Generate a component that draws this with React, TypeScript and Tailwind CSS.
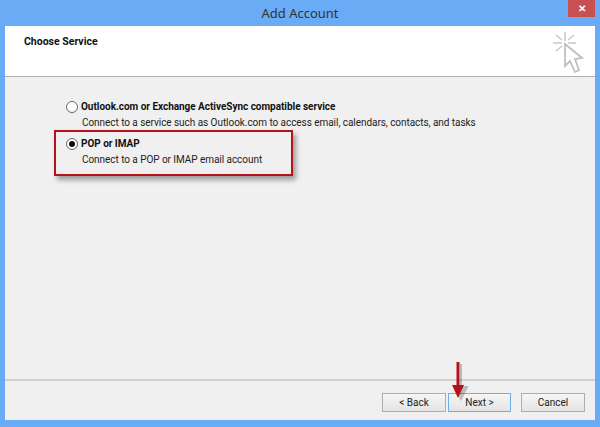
function ClickIcon() {
  return (
    <svg width="36" height="50" viewBox="0 0 36 50" fill="none" className="mt-[4px] mr-[8px]">
      <g stroke="#c8c8c8" strokeWidth="1.5">
        <path d="M14 2V11M2 13H11M17 13H25M5 5L11 10M23 5L17 10M5 21L11 16" />
      </g>
      <path d="M14 14V36L19 31L24 42L28 40L24 29L31 28Z" fill="#fff" stroke="#c0c0c0" strokeWidth="1.8" />
    </svg>
  )
}

function Radio({ checked }: { checked?: boolean }) {
  return (
    <span className="flex h-[12px] w-[12px] shrink-0 items-center justify-center rounded-full border border-[#666] bg-white">
      {checked && <span className="h-[6px] w-[6px] rounded-full bg-[#111]" />}
    </span>
  )
}

function Option({ label, detail, checked }: { label: string; detail: string; checked?: boolean }) {
  return (
    <div className="flex flex-col gap-[2px]">
      <div className="flex h-[14px] items-center gap-[3px]">
        <Radio checked={checked} />
        <span className="text-[10px] leading-[14px] font-bold tracking-[-0.03px] text-[#111]">{label}</span>
      </div>
      <div className="pl-[16px] text-[10px] leading-[14px] tracking-[-0.05px] text-[#222]">{detail}</div>
    </div>
  )
}

function Btn({ label, focused, className }: { label: string; focused?: boolean; className: string }) {
  return (
    <button
      className={`h-[19px] border bg-gradient-to-b from-[#f6f6f6] to-[#e4e4e4] text-[10px] leading-[16px] text-[#222] ${
        focused ? 'border-[#6aaef0]' : 'border-[#adadad]'
      } ${className}`}
    >
      {label}
    </button>
  )
}

export default function App() {
  return (
    <div
      className="relative flex h-[427px] w-[600px] flex-col overflow-hidden bg-[#69abf5] px-[5px] pb-[7px]"
      style={{ fontFamily: 'Roboto, "Liberation Sans", sans-serif' }}
    >
      {/* title bar */}
      <div className="relative flex h-[26px] shrink-0 items-center justify-center">
        <span className="pt-[1px] text-[13px] text-[#333]" style={{ fontFamily: '"Noto Sans", sans-serif' }}>
          Add Account
        </span>
        <div className="absolute top-0 right-[0px] flex h-[17px] w-[27px] items-center justify-center bg-[#c75050] text-[10px] font-bold text-white">
          ✕
        </div>
      </div>

      <div className="flex flex-1 flex-col bg-[#f0f0f0]">
        {/* header */}
        <div className="flex h-[51px] shrink-0 justify-between border-b border-[#b0b0b0] bg-white pl-[19px]">
          <div className="pt-[9px] text-[10.5px] leading-[14px] font-bold text-[#111]">Choose Service</div>
          <ClickIcon />
        </div>

        {/* options */}
        <div className="flex flex-1 flex-col gap-[7px] pt-[23px] pl-[61px]">
          <Option
            label="Outlook.com or Exchange ActiveSync compatible service"
            detail="Connect to a service such as Outlook.com to access email, calendars, contacts, and tasks"
          />
          <Option label="POP or IMAP" detail="Connect to a POP or IMAP email account" checked />
        </div>

        {/* footer */}
        <div className="flex h-[41px] shrink-0 items-start border-t-2 border-[#d0d0d0] pt-[12px] pl-[377px]">
          <Btn label="< Back" className="w-[64px]" />
          <Btn label="Next >" focused className="ml-[2px] w-[63px]" />
          <Btn label="Cancel" className="ml-[10px] w-[64px]" />
        </div>
      </div>

      {/* annotation: highlight box */}
      <div className="absolute top-[130px] left-[54px] h-[46px] w-[239px] border-2 border-[#b5121b] shadow-[3px_4px_5px_rgba(0,0,0,0.35)]" />

      {/* annotation: arrow */}
      <svg width="30" height="46" viewBox="0 0 30 46" className="absolute top-[361px] left-[443px]" fill="none">
        <path d="M15 2V25M9 25H21L15 37Z" fill="#000" stroke="#000" strokeWidth="2" opacity="0.22" transform="translate(3 1)" />
        <rect x="13.5" y="1" width="3" height="24" fill="#b5121b" />
        <path d="M9 24H21L15 37Z" fill="#b5121b" />
      </svg>
    </div>
  )
}
